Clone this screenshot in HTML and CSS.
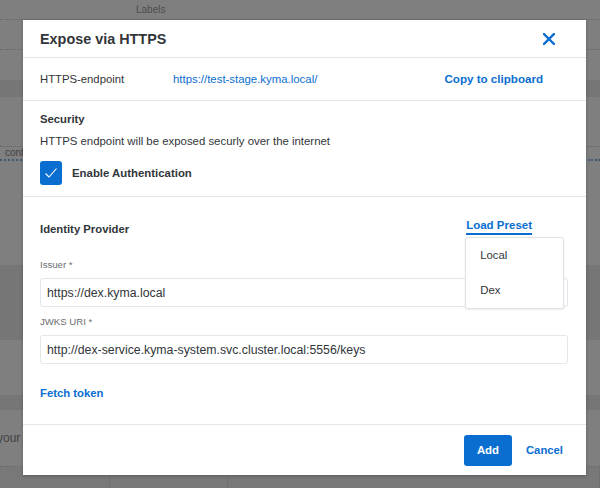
FILE: index.html
```html
<!DOCTYPE html>
<html lang="en">
<head>
<meta charset="utf-8">
<title>Expose via HTTPS</title>
<link rel="stylesheet" href="styles.css">
</head>
<body>
<div class="page">
  <div class="pg-top"><span class="pg-labels">Labels</span></div>
  <div class="pg-row pg-h30"></div>
  <div class="pg-gap30"></div>
  <div class="pg-band pg-h17"></div>
  <div class="pg-row pg-h50"></div>
  <div class="pg-text-row"><span class="pg-cont">cont</span></div>
  <div class="pg-dots-row">
    <div class="pg-dots pg-dots-l"></div>
    <div class="pg-dots pg-dots-r"></div>
  </div>
  <div class="pg-gap102"></div>
  <div class="pg-dark pg-h75"></div>
  <div class="pg-gap55"></div>
  <div class="pg-band pg-h15"></div>
  <div class="pg-text-row2"><span class="pg-your">your l</span></div>
  <div class="pg-bottom">
    <div class="pg-cell pg-w110"></div>
    <div class="pg-cell pg-w118"></div>
    <div class="pg-cell pg-grow"></div>
  </div>
</div>

<div class="backdrop"></div>

<div class="dialog" role="dialog" aria-labelledby="dlg-title">
  <header class="dlg-header">
    <h1 id="dlg-title" class="dlg-title">Expose via HTTPS</h1>
    <button class="dlg-close" aria-label="Close">
      <svg width="12" height="12" viewBox="0 0 12 12"><path d="M1 1 L11 11 M11 1 L1 11" stroke="#0a6ed1" stroke-width="2.4" stroke-linecap="square" fill="none"/></svg>
    </button>
  </header>

  <section class="endpoint-row">
    <span class="ep-label">HTTPS-endpoint</span>
    <a class="ep-link" href="#">https://test-stage.kyma.local/</a>
    <button class="link-btn ep-copy">Copy to clipboard</button>
  </section>

  <section class="security">
    <h2 class="sec-title">Security</h2>
    <p class="sec-desc">HTTPS endpoint will be exposed securly over the internet</p>
    <label class="check-row">
      <span class="checkbox">
        <svg width="14" height="12" viewBox="0 0 14 12"><path d="M1.5 6.5 L5 10 L12.5 1.5" stroke="#fff" stroke-width="1.1" fill="none"/></svg>
      </span>
      <span class="check-label">Enable Authentication</span>
    </label>
  </section>

  <section class="idp">
    <div class="idp-head">
      <h2 class="sec-title">Identity Provider</h2>
      <div class="preset">
        <button class="link-btn preset-btn">Load Preset</button>
        <ul class="preset-menu">
          <li>Local</li>
          <li>Dex</li>
        </ul>
      </div>
    </div>
    <label class="field-label lbl-issuer">Issuer *</label>
    <div class="input">https://dex.kyma.local</div>
    <label class="field-label lbl-jwks">JWKS URI *</label>
    <div class="input">http://dex-service.kyma-system.svc.cluster.local:5556/keys</div>
    <button class="link-btn fetch">Fetch token</button>
  </section>

  <footer class="dlg-footer">
    <button class="btn-primary">Add</button>
    <button class="link-btn cancel">Cancel</button>
  </footer>
</div>
</body>
</html>
```

FILE: styles.css
```css
* { box-sizing: border-box; }
html, body { margin: 0; padding: 0; }
body {
  width: 600px;
  height: 488px;
  overflow: hidden;
  font-family: "Liberation Sans", Arial, sans-serif;
  color: #32363a;
  background: #fff;
  position: relative;
}

/* background page (dimmed by backdrop) */
.page { width: 600px; height: 488px; display: flex; flex-direction: column; }
.pg-top { height: 20px; border-bottom: 1px dotted #c8c8c8; display: flex; align-items: center; padding-left: 136px; }
.pg-labels { font-size: 10px; color: #9a9a9a; }
.pg-row { border-bottom: 1px dotted #c8c8c8; }
.pg-h30 { height: 30px; }
.pg-gap30 { height: 30px; }
.pg-band { background: #ececec; }
.pg-h17 { height: 17px; }
.pg-h15 { height: 15px; }
.pg-h50 { height: 50px; }
.pg-text-row { height: 10px; display: flex; align-items: center; padding-left: 5px; }
.pg-cont { font-size: 10px; color: #888; }
.pg-dots-row { height: 6px; display: flex; justify-content: space-between; }
.pg-dots { height: 4px; border-bottom: 2px dotted #7fb0e6; }
.pg-dots-l { width: 22px; }
.pg-dots-r { width: 12px; }
.pg-gap102 { height: 102px; }
.pg-dark { background: #ededed; }
.pg-h75 { height: 75px; }
.pg-gap55 { height: 55px; }
.pg-text-row2 { height: 57px; display: flex; align-items: center; border-bottom: 1px dotted #c8c8c8; }
.pg-your { font-size: 12px; color: #888; margin-left: -3px; }
.pg-bottom { flex: 1; display: flex; background: #f0f0f0; }
.pg-cell { border-right: 1px solid #e0e0e0; }
.pg-w110 { width: 110px; }
.pg-w118 { width: 118px; }
.pg-grow { flex: 1; }

.backdrop { position: absolute; inset: 0; background: rgba(0,0,0,0.5); }

/* dialog */
.dialog {
  position: absolute;
  left: 23px;
  top: 20px;
  width: 563px;
  height: 455px;
  background: #fff;
  box-shadow: 0 1px 3px rgba(0,0,0,0.25);
  display: flex;
  flex-direction: column;
}
button { font-family: inherit; border: 0; background: none; padding: 0; cursor: pointer; }
.link-btn { color: #0a6ed1; font-weight: bold; font-size: 11.3px; line-height: 14px; }

.dlg-header {
  height: 38px;
  border-bottom: 1px solid #e4e7ea;
  display: flex;
  align-items: center;
  padding: 0 31px 0 17px;
  flex: none;
}
.dlg-title { margin: 0; font-size: 14.4px; font-weight: bold; color: #32363a; flex: 1; padding-top: 1px; }
.dlg-close { width: 12px; height: 12px; display: flex; }

.endpoint-row {
  height: 43px;
  border-bottom: 1px solid #e4e7ea;
  display: flex;
  align-items: center;
  padding: 0 43px 0 17px;
  font-size: 11.3px;
  flex: none;
}
.ep-label { width: 133px; }
.ep-link { color: #0a6ed1; text-decoration: none; font-size: 11.4px; }
.ep-copy { margin-left: auto; font-size: 11.6px; }

.security {
  height: 96px;
  border-bottom: 1px solid #e4e7ea;
  padding: 11px 17px 0;
  flex: none;
}
.sec-title { margin: 0; font-size: 11.3px; line-height: 14px; font-weight: bold; color: #32363a; }
.sec-desc { margin: 8px 0 0; font-size: 11.4px; line-height: 14px; }
.check-row { display: flex; align-items: center; margin-top: 13px; gap: 10px; }
.checkbox {
  width: 22px; height: 24px;
  border-radius: 3px;
  background: #0a6ed1;
  display: flex; align-items: center; justify-content: center;
}
.check-label { font-size: 11.4px; font-weight: bold; }

.idp {
  flex: 1;
  border-bottom: 1px solid #e4e7ea;
  padding: 21px 18px 0 17px;
  display: flex;
  flex-direction: column;
  align-items: flex-start;
}
.idp-head { display: flex; align-items: flex-end; justify-content: space-between; width: 100%; padding-right: 36px; }
.idp-head .sec-title { margin-bottom: -1px; }
.preset { position: relative; }
.preset-btn { font-size: 11.5px; border-bottom: 2px solid #0a6ed1; padding-bottom: 1px; display: block; }
.preset-menu {
  position: absolute;
  top: 19px;
  left: -1px;
  width: 99px;
  margin: 0; padding: 0;
  list-style: none;
  background: #fff;
  border: 1px solid #dfe3e8;
  border-radius: 2px;
  box-shadow: 0 1px 2px rgba(0,0,0,0.08);
  z-index: 2;
}
.preset-menu li { height: 35px; line-height: 34px; padding-left: 14px; font-size: 11.4px; color: #32363a; }

.field-label { font-size: 9.6px; line-height: 12px; color: #6a6d70; display: block; }
.lbl-issuer { margin-top: 24px; }
.lbl-jwks { margin-top: 9px; }
.input {
  margin-top: 7px;
  width: 100%;
  height: 29px;
  border: 1px solid #e3e6ea;
  border-radius: 3px;
  padding-left: 6px;
  display: flex;
  align-items: center;
  font-size: 12.3px;
  color: #32363a;
}
.fetch { margin-top: 22px; font-size: 11.3px; }

.dlg-footer {
  height: 50px;
  flex: none;
  display: flex;
  align-items: center;
  justify-content: flex-end;
  padding-right: 23px;
  gap: 14px;
}
.btn-primary {
  width: 48px; height: 31px;
  border-radius: 3px;
  background: #0a6ed1;
  color: #fff;
  font-weight: bold;
  font-size: 11.4px;
}
.cancel { font-size: 11.3px; }
```
